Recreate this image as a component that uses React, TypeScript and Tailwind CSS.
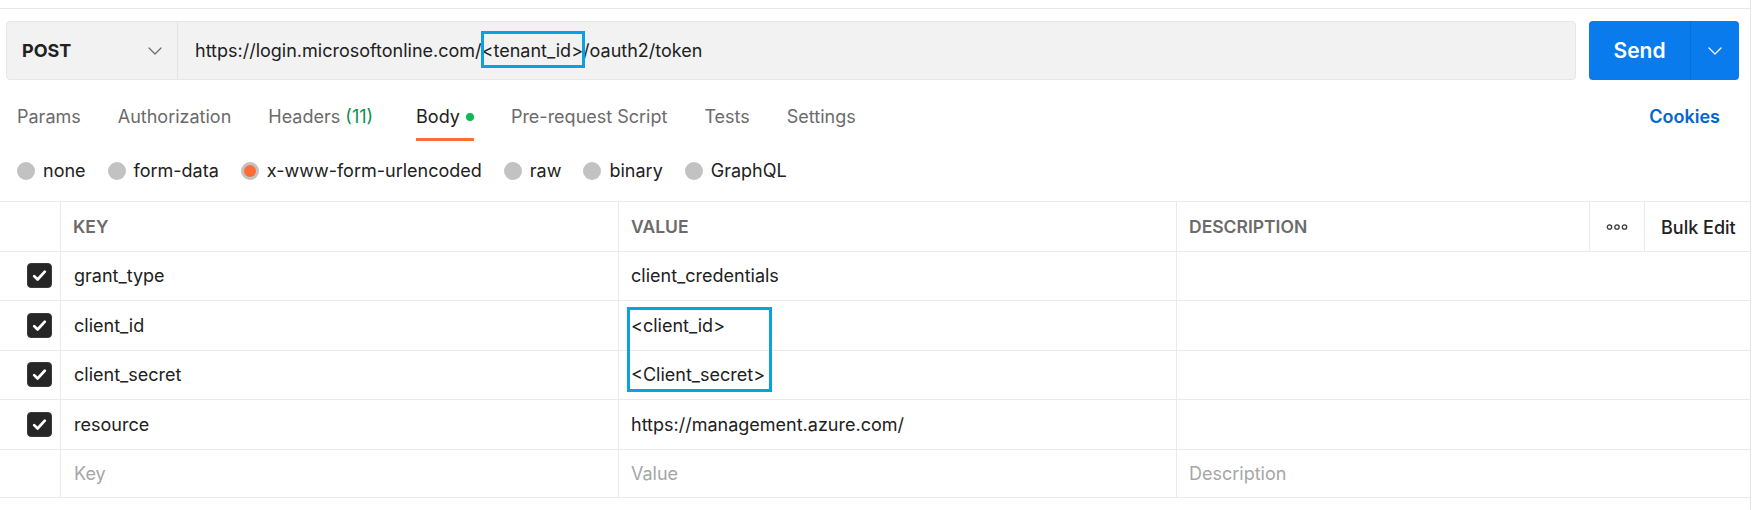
import { ChevronDown } from 'lucide-react'

const tabs = [
	{ label: 'Params' },
	{ label: 'Authorization' },
	{ label: 'Headers', count: '(11)' },
	{ label: 'Body', active: true },
	{ label: 'Pre-request Script' },
	{ label: 'Tests' },
	{ label: 'Settings' },
]

const bodyTypes = ['none', 'form-data', 'x-www-form-urlencoded', 'raw', 'binary', 'GraphQL']

const params = [
	{ key: 'grant_type', value: 'client_credentials' },
	{ key: 'client_id', value: '<client_id>', marked: true },
	{ key: 'client_secret', value: '<Client_secret>' },
	{ key: 'resource', value: 'https://management.azure.com/' },
]

function CheckBox() {
	return (
		<div className="flex h-[25px] w-[25px] items-center justify-center rounded-[4px] border border-[#3a3a3a] bg-[#262626]">
			<svg width="17" height="17" viewBox="0 0 16 16" fill="none">
				<path
					d="M3 8.6l3.2 3.2L13 4.4"
					stroke="white"
					strokeWidth={2.6}
					strokeLinecap="round"
					strokeLinejoin="round"
				/>
			</svg>
		</div>
	)
}

export default function App() {
	return (
		<div className="min-h-screen bg-white font-['Inter',sans-serif] text-[#212121]">
			<div className="min-h-[510px] w-[1751px] border-r border-[#e6e6e6]">
				<div className="h-[9px] border-b border-[#e6e6e6]" />

				{/* url bar */}
				<div className="mt-[12px] flex gap-[13px] pl-[6px] pr-[11px]">
					<div className="flex h-[59px] flex-1 items-center rounded-[4px] border border-[#e6e6e6] bg-[#f2f2f2]">
						<div className="flex h-full w-[171px] items-center justify-between border-r border-[#e3e3e3] pl-[15px] pr-[10px]">
							<span className="text-[18px] font-bold leading-[24px]">POST</span>
							<ChevronDown size={24} strokeWidth={1.2} className="text-[#6b6b6b]" />
						</div>
						<div className="pl-[17px] text-[18px] leading-[24px]">
							https://login.microsoftonline.com/
							<span className="relative inline-block">
								&lt;tenant_id&gt;
								<span className="absolute -left-[1px] -right-[2px] -top-[8px] -bottom-[5px] border-[3px] border-[#0aa1e3]" />
							</span>
							/oauth2/token
						</div>
					</div>
					<div className="flex h-[59px] w-[150px] rounded-[4px] bg-[#097bed] text-white">
						<div className="flex flex-1 items-center justify-center border-r border-[#0a6ed6] text-[21px] font-semibold">
							Send
						</div>
						<div className="flex w-[48px] items-center justify-center">
							<ChevronDown size={24} strokeWidth={1.3} />
						</div>
					</div>
				</div>

				{/* tabs */}
				<div className="mt-[16px] flex items-end justify-between pl-[17px] pr-[30px]">
					<div className="flex gap-[37px]">
						{tabs.map((tab) => (
							<div
								key={tab.label}
								className={`flex items-center gap-[6px] border-b-[3px] pt-[9px] pb-[9px] text-[18px] leading-[24px] ${
									tab.active ? 'border-[#ff6c37] text-[#212121]' : 'border-transparent text-[#6b6b6b]'
								} ${tab.count ? 'mr-[6px]' : ''}`}
							>
								<span>
									{tab.label}
									{tab.count && <span className="text-[#0a8f50]"> {tab.count}</span>}
								</span>
								{tab.active && <span className="h-[8px] w-[8px] rounded-full bg-[#0cbb52]" />}
							</div>
						))}
					</div>
					<span className="pb-[12px] text-[18px] font-semibold leading-[24px] text-[#0265d2]">Cookies</span>
				</div>

				{/* body type */}
				<div className="mt-[18px] flex gap-[22px] pl-[17px]">
					{bodyTypes.map((t) => (
						<label key={t} className="flex items-center gap-[8px] text-[18px] leading-[24px]">
							<span className="flex h-[18px] w-[18px] items-center justify-center rounded-full bg-[#c2c2c2]">
								{t === 'x-www-form-urlencoded' && (
									<span className="h-[12px] w-[12px] rounded-full bg-[#ff6c37]" />
								)}
							</span>
							{t}
						</label>
					))}
				</div>

				{/* table */}
				<div className="mt-[18px] w-[1750px] border-t border-[#ebebeb]">
					<div className="grid h-[49.5px] grid-cols-[60px_558px_558px_413px_55px_106px] border-b border-[#ebebeb] text-[17.5px] font-semibold text-[#6b6b6b]">
						<div />
						<div className="flex items-center border-l border-[#ebebeb] pl-[12px] pt-[2px]">KEY</div>
						<div className="flex items-center border-l border-[#ebebeb] pl-[12px] pt-[2px]">VALUE</div>
						<div className="flex items-center border-l border-[#ebebeb] pl-[12px] pt-[2px]">DESCRIPTION</div>
						<div className="flex items-center justify-center border-l border-[#ebebeb] pt-[2px]">
							<svg width="22" height="6" viewBox="0 0 22 6" fill="none" stroke="#3a3a3a" strokeWidth={1.3}>
								<circle cx="3.5" cy="3" r="2.2" />
								<circle cx="11" cy="3" r="2.2" />
								<circle cx="18.5" cy="3" r="2.2" />
							</svg>
						</div>
						<div className="flex items-center border-l border-[#ebebeb] pl-[16px] pt-[2px] text-[18px] font-medium text-[#212121]">
							Bulk Edit
						</div>
					</div>

					{params.map((p) => (
						<div
							key={p.key}
							className="grid h-[49.5px] grid-cols-[60px_558px_558px_1fr] border-b border-[#ebebeb] text-[18px]"
						>
							<div className="flex items-center pl-[27px]">
								<CheckBox />
							</div>
							<div className="flex items-center border-l border-[#ebebeb] pl-[13px]">{p.key}</div>
							<div className="relative flex items-center border-l border-[#ebebeb] pl-[12px]">
								{p.value}
								{p.marked && (
									<div className="absolute left-[8px] top-[6px] z-10 h-[85px] w-[145px] border-[3px] border-[#0aa1e3]" />
								)}
							</div>
							<div className="border-l border-[#ebebeb]" />
						</div>
					))}

					<div className="grid h-[48.5px] grid-cols-[60px_558px_558px_1fr] border-b border-[#ebebeb] text-[18px] text-[#a6a6a6]">
						<div />
						<div className="flex items-center border-l border-[#ebebeb] pl-[13px]">Key</div>
						<div className="flex items-center border-l border-[#ebebeb] pl-[12px]">Value</div>
						<div className="flex items-center border-l border-[#ebebeb] pl-[12px]">Description</div>
					</div>
				</div>
			</div>
		</div>
	)
}
